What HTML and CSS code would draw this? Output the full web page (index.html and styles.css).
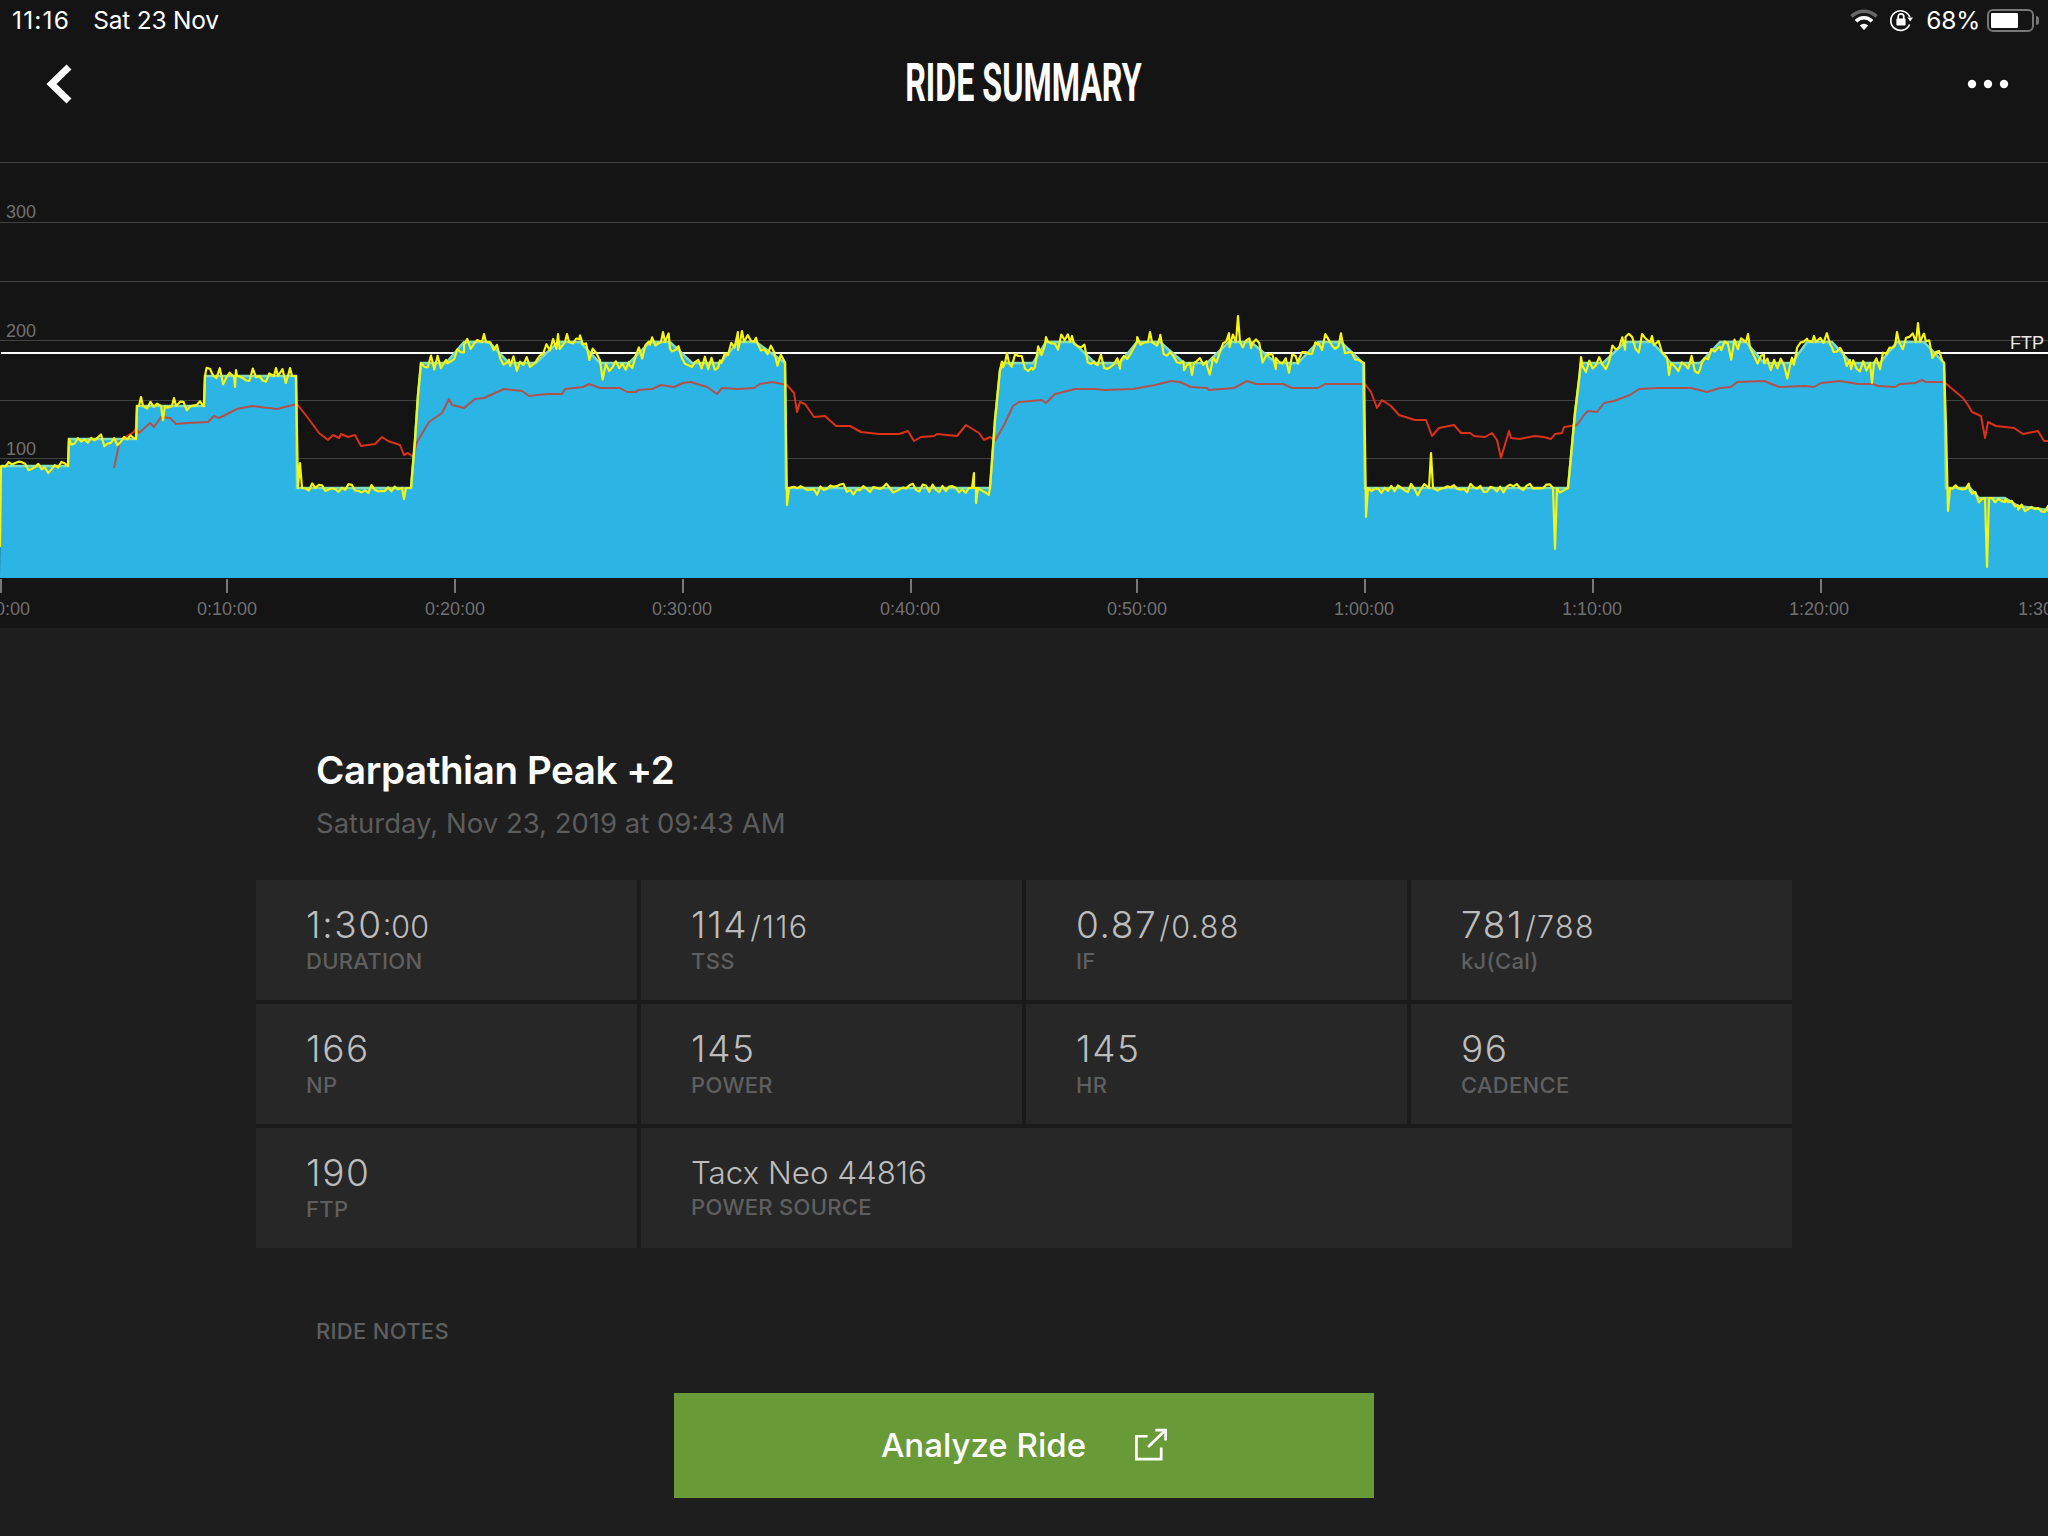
FILE: index.html
```html
<!DOCTYPE html>
<html lang="en">
<head>
<meta charset="utf-8">
<title>Ride Summary</title>
<link rel="stylesheet" href="styles.css">
</head>
<body>
<div class="page">
  <section class="top">
    <div class="status">
      <div class="status-left"><span class="clock">11:16</span><span>Sat 23 Nov</span></div>
      <div class="status-right">
        <svg class="ic-wifi" viewBox="0 0 30 22" aria-hidden="true">
          <path class="wifi-dim" d="M2.5 7.5A17.5 17.5 0 0 1 27.5 7.5"/>
          <path class="wifi-on" d="M7 12.2A11 11 0 0 1 23 12.2"/>
          <path class="wifi-dot" d="M10.8 16.4Q15 13.2 19.2 16.4L15 21Z"/>
        </svg>
        <svg class="ic-lock" viewBox="0 0 24 24" aria-hidden="true">
          <path class="lock-ring" d="M20.8 9.2A9.8 9.8 0 1 0 20.6 16.5"/>
          <path class="lock-fill" d="M18.4 9.6H24L21.2 13.4Z"/>
          <path class="lock-shackle" d="M9.2 11V8.6A2.8 2.8 0 0 1 14.8 8.6V11"/>
          <rect class="lock-fill" x="7.4" y="10.6" width="9.2" height="7" rx="1"/>
        </svg>
        <span class="batt-pct">68%</span>
        <div class="battery"><div class="battery-level"></div></div>
        <div class="battery-cap"></div>
      </div>
    </div>
    <header class="nav">
      <svg class="ic-back" viewBox="0 0 30 44" aria-hidden="true"><path d="M25 5 7.5 22 25 39"/></svg>
      <h1 class="nav-title">RIDE SUMMARY</h1>
      <svg class="ic-more" viewBox="0 0 42 10" aria-hidden="true">
        <circle cx="5" cy="5" r="4.2"/><circle cx="21" cy="5" r="4.2"/><circle cx="37" cy="5" r="4.2"/>
      </svg>
    </header>
    <svg class="chart" viewBox="0 128 2048 500" aria-label="Power chart">
      <g class="grid-lines">
        <line x1="0" x2="2048" y1="162.5" y2="162.5"/>
        <line x1="0" x2="2048" y1="222.5" y2="222.5"/>
        <line x1="0" x2="2048" y1="281.5" y2="281.5"/>
        <line x1="0" x2="2048" y1="340.5" y2="340.5"/>
        <line x1="0" x2="2048" y1="400.5" y2="400.5"/>
        <line x1="0" x2="2048" y1="458.5" y2="458.5"/>
      </g>
      <g class="axis-y">
        <text x="6" y="218">300</text>
        <text x="6" y="337">200</text>
        <text x="6" y="455">100</text>
      </g>
      <rect class="ftp-line" x="1" y="352" width="2047" height="2"/>
      <text class="ftp-label" x="2010" y="349">FTP</text>
      <path id="area" class="area"/>
      <path id="hr" class="hr"/>
      <path id="area-veil" class="area-veil"/>
      <path id="target" class="target"/>
      <path id="power" class="power"/>
      <g class="ticks">
        <line x1="1" x2="1" y1="579" y2="593"/>
        <line x1="227" x2="227" y1="579" y2="593"/>
        <line x1="455" x2="455" y1="579" y2="593"/>
        <line x1="683" x2="683" y1="579" y2="593"/>
        <line x1="911" x2="911" y1="579" y2="593"/>
        <line x1="1137" x2="1137" y1="579" y2="593"/>
        <line x1="1365" x2="1365" y1="579" y2="593"/>
        <line x1="1593" x2="1593" y1="579" y2="593"/>
        <line x1="1821" x2="1821" y1="579" y2="593"/>
      </g>
      <g class="axis-x">
        <text x="0" y="615">0:00:00</text>
        <text x="227" y="615">0:10:00</text>
        <text x="455" y="615">0:20:00</text>
        <text x="682" y="615">0:30:00</text>
        <text x="910" y="615">0:40:00</text>
        <text x="1137" y="615">0:50:00</text>
        <text x="1364" y="615">1:00:00</text>
        <text x="1592" y="615">1:10:00</text>
        <text x="1819" y="615">1:20:00</text>
        <text x="2048" y="615">1:30:00</text>
      </g>
    </svg>
  </section>
  <main class="content">
    <h2 class="ride-name">Carpathian Peak +2</h2>
    <p class="ride-date">Saturday, Nov 23, 2019 at 09:43 AM</p>
    <div class="stats">
      <div class="stat"><div class="val">1:30<small class="small-tight">:00</small></div><div class="lab">DURATION</div></div>
      <div class="stat"><div class="val">114<small>/116</small></div><div class="lab">TSS</div></div>
      <div class="stat"><div class="val">0.87<small>/0.88</small></div><div class="lab">IF</div></div>
      <div class="stat"><div class="val">781<small>/788</small></div><div class="lab">kJ(Cal)</div></div>
      <div class="stat"><div class="val">166</div><div class="lab">NP</div></div>
      <div class="stat"><div class="val">145</div><div class="lab">POWER</div></div>
      <div class="stat"><div class="val">145</div><div class="lab">HR</div></div>
      <div class="stat"><div class="val">96</div><div class="lab">CADENCE</div></div>
      <div class="stat"><div class="val">190</div><div class="lab">FTP</div></div>
      <div class="stat stat-wide"><div class="val val-text">Tacx Neo 44816</div><div class="lab lab-tight">POWER SOURCE</div></div>
    </div>
    <div class="notes">RIDE NOTES</div>
    <button class="analyze" type="button">
      <span>Analyze Ride</span>
      <svg class="ic-ext" viewBox="0 0 34 34" aria-hidden="true">
        <path d="M14 8.5H2.5V32H28V20"/><path d="M14.5 19.5 32 2.5"/><path d="M22 2.2H32.6V13"/>
      </svg>
    </button>
  </main>
</div>
<script src="chart.js"></script>
</body>
</html>
```

FILE: styles.css
```css
* { box-sizing: border-box; }
html, body { margin: 0; padding: 0; background: #1e1e1e; }
.page {
  width: 2048px;
  height: 1536px;
  overflow: hidden;
  display: flex;
  flex-direction: column;
  font-family: Inter, "Liberation Sans", sans-serif;
  color: #fff;
}
.top { background: #141414; height: 628px; flex: none; }
.status {
  height: 40px;
  display: flex;
  justify-content: space-between;
  align-items: center;
  padding: 0 9px 0 12px;
  font-size: 24.5px;
  letter-spacing: -0.2px;
}
.status-left { display: flex; gap: 23px; }
.clock { letter-spacing: 1.2px; }
.status-right { display: flex; align-items: center; }
.ic-wifi { width: 30px; height: 22px; margin-right: 10px; }
.wifi-dim, .wifi-on { fill: none; stroke-width: 3.6; }
.wifi-dim { stroke: #666; }
.wifi-on { stroke: #fff; }
.wifi-dot { fill: #fff; }
.ic-lock { width: 24px; height: 24px; margin-right: 13px; }
.lock-ring, .lock-shackle { fill: none; stroke: #fff; stroke-width: 1.7; }
.lock-fill { fill: #fff; }
.batt-pct { margin-right: 7px; }
.battery {
  width: 47px;
  height: 23px;
  border: 2px solid #777;
  border-radius: 6px;
  padding: 2px;
}
.battery-level { width: 68%; height: 100%; background: #fff; border-radius: 1px; }
.battery-cap {
  width: 3px;
  height: 9px;
  margin-left: 2px;
  background: #777;
  border-radius: 0 3px 3px 0;
}
.nav {
  height: 88px;
  display: grid;
  grid-template-columns: 1fr auto 1fr;
  align-items: center;
  padding: 0 39px 0 44px;
}
.ic-back { width: 30px; height: 44px; }
.ic-back path { fill: none; stroke: #fff; stroke-width: 7; }
.nav-title {
  margin: 0 6px 2px 0;
  font-family: Roboto, "Liberation Sans", sans-serif;
  font-size: 53px;
  line-height: 60px;
  font-weight: 700;
  transform: scaleX(0.608);
  white-space: nowrap;
}
.ic-more { width: 42px; height: 10px; justify-self: end; fill: #fff; }
.chart { display: block; width: 2048px; height: 500px; }
.grid-lines line { stroke: #424242; stroke-width: 1; }
.axis-y text, .axis-x text {
  font-family: "Liberation Sans", sans-serif;
  font-size: 18px;
  fill: #707070;
}
.axis-x text { text-anchor: middle; }
.ftp-line { fill: #fff; }
.ftp-label { font-family: "Liberation Sans", sans-serif; font-size: 18px; fill: #e8e8e8; }
.area { fill: #2bb5e5; }
.area-veil { fill: #2bb5e5; opacity: 0.25; }
.hr { fill: none; stroke: #dc3118; stroke-width: 2; stroke-linejoin: round; }
.target { fill: none; stroke: #80dcc0; stroke-width: 2.5; }
.power { fill: none; stroke: #f4f415; stroke-width: 2.2; stroke-linejoin: round; }
.ticks line { stroke: #777; stroke-width: 2; }

.content { flex: 1; width: 1536px; margin: 0 auto; }
.ride-name {
  margin: 120px 0 0 60px;
  font-size: 38.5px;
  line-height: 44px;
  font-weight: 600;
  letter-spacing: -0.4px;
}
.ride-date {
  margin: 13px 0 0 60px;
  font-size: 27.5px;
  line-height: 36px;
  color: #5c5c5c;
}
.stats {
  margin-top: 39px;
  display: grid;
  grid-template-columns: repeat(4, 381px);
  grid-auto-rows: 120px;
  gap: 4px;
  background: #1b1b1b;
}
.stat { background: #272727; padding: 23px 0 0 50px; }
.stat-wide { grid-column: span 3; }
.val {
  height: 44px;
  font-size: 37px;
  line-height: 44px;
  font-weight: 300;
  color: #bcbcbc;
  white-space: pre;
  letter-spacing: 1.6px;
}
.val small { font-size: 30.5px; margin-left: 2px; letter-spacing: 1.3px; }
.val .small-tight { margin-left: 0; letter-spacing: 0; }
.val-text { font-size: 31.3px; letter-spacing: 0; }
.lab {
  margin-top: 1px;
  font-size: 22px;
  line-height: 26px;
  font-weight: 500;
  color: #5f5f5f;
  letter-spacing: 0.3px;
}
.lab-tight { margin-top: -1px; }
.notes {
  margin: 68px 0 0 60px;
  font-size: 22px;
  line-height: 30px;
  font-weight: 500;
  color: #5f5f5f;
  letter-spacing: 0.3px;
}
.analyze {
  display: flex;
  align-items: center;
  justify-content: center;
  gap: 48px;
  width: 700px;
  height: 105px;
  margin: 47px auto 0;
  padding: 0 0 2px;
  border: 0;
  background: #689a37;
  color: #fff;
  font-family: Inter, "Liberation Sans", sans-serif;
  font-size: 33px;
  font-weight: 500;
}
.ic-ext { width: 33px; height: 33px; }
.ic-ext path { fill: none; stroke: #fff; stroke-width: 2.8; }
```

FILE: chart.js
```js
// Workout profile, heart rate and power traces, in chart coordinates.
var B = 578, H = 342, M = 363, L = 488;
var profile = [
  [0,578],[1,466],[68,466],[69,439],[136,439],[137,406],[204,406],[205,376],[296,376],[297,488],
  [411,488],[415,440],[418,395],[421,363],[446,363],[464,H],[489,H],[509,M],[536,M],[558,H],[580,H],[600,M],
  [629,M],[650,H],[670,H],[692,M],[720,M],[738,H],[756,H],[785,M],[786,L],
  [990,L],[995,420],[1000,370],[1003,M],[1033,M],[1046,H],[1073,H],[1095,M],[1120,M],[1137,H],[1160,H],[1184,M],
  [1207,M],[1229,H],[1251,H],[1276,M],[1298,M],[1318,H],[1341,H],[1363,M],[1365,L],
  [1568,L],[1575,413],[1581,M],[1603,M],[1625,H],[1652,H],[1671,M],[1700,M],[1720,H],[1746,H],[1764,M],
  [1792,M],[1807,H],[1832,H],[1851,M],[1880,M],[1897,H],[1924,H],[1944,M],[1946,L],
  [1970,L],[1979,498],[2005,498],[2018,506],[2048,510]
];
var hr = [
  [114,468],[120,440],[134,432],[136,428],[139,433],[150,423],[154,427],[161,417],[170,418],[176,424],[187,423],[208,422],
  [214,416],[219,418],[237,409],[252,406],[277,409],[297,404],[308,418],[319,433],[328,440],[333,435],[339,438],[341,434],
  [348,437],[355,435],[361,446],[375,444],[382,437],[388,441],[400,445],[404,455],[408,453],[413,457],[417,442],[429,422],
  [442,413],[449,399],[452,405],[464,408],[475,399],[484,398],[504,389],[522,391],[529,396],[547,394],[562,394],[565,389],
  [583,387],[589,384],[600,388],[620,388],[627,392],[636,392],[638,390],[652,389],[661,385],[674,387],[683,383],[691,382],
  [707,387],[717,394],[722,388],[738,389],[754,388],[760,384],[772,382],[787,385],[794,393],[797,412],[800,402],[805,404],
  [814,417],[825,416],[836,426],[850,426],[861,432],[879,434],[899,434],[908,431],[914,441],[921,437],[934,436],[937,434],
  [957,436],[966,425],[979,433],[984,440],[990,437],[995,441],[1004,425],[1013,406],[1019,402],[1042,400],[1046,403],
  [1055,394],[1075,389],[1095,389],[1104,390],[1133,389],[1155,385],[1171,381],[1180,382],[1191,387],[1207,388],[1209,390],
  [1234,388],[1247,381],[1256,384],[1283,384],[1292,388],[1318,388],[1325,384],[1365,384],[1371,392],[1377,408],[1382,400],
  [1391,406],[1399,415],[1415,420],[1426,420],[1432,436],[1439,428],[1454,425],[1461,433],[1470,433],[1474,436],[1485,437],
  [1492,433],[1497,440],[1501,458],[1509,431],[1511,438],[1519,439],[1535,436],[1544,437],[1551,439],[1555,434],[1562,433],
  [1564,427],[1577,425],[1584,415],[1588,411],[1597,412],[1604,403],[1614,401],[1630,395],[1639,389],[1658,388],[1691,388],
  [1707,392],[1720,388],[1731,387],[1737,382],[1764,381],[1779,387],[1805,386],[1814,387],[1821,383],[1840,381],[1858,384],
  [1873,384],[1878,386],[1895,387],[1900,384],[1915,383],[1922,380],[1926,382],[1944,382],[1963,398],[1968,405],[1972,412],
  [1981,416],[1985,438],[1988,422],[1996,426],[2014,428],[2023,434],[2038,431],[2044,441],[2048,441]
];
var spikes = [
  [141,397],[163,420],[174,398],[235,387],[236,370],[276,368],[290,368],[300,463],[404,499],[484,334],[567,334],[663,332],
  [742,331],[787,505],[974,473],[976,503],[1007,353],[1072,336],[1150,332],[1192,375],[1238,316],[1366,517],[1431,453],
  [1555,549],[1652,336],[1669,375],[1748,334],[1814,336],[1872,383],[1897,332],[1918,323],[1948,511],[1987,567]
];

function toPath(pts) {
  return pts.map(function (p, i) {
    return (i ? "L" : "M") + p[0].toFixed(1) + " " + p[1].toFixed(1);
  }).join("");
}
function profileAt(x) {
  for (var i = 1; i < profile.length; i++) {
    if (x <= profile[i][0]) {
      var a = profile[i - 1], b = profile[i];
      return a[1] + (b[1] - a[1]) * (x - a[0]) / Math.max(b[0] - a[0], 1);
    }
  }
  return profile[profile.length - 1][1];
}
var seed = 20191123;
function rnd() {
  seed = (seed * 1664525 + 1013904223) >>> 0;
  return seed / 4294967296;
}
function buildPower() {
  var pts = [[0, 547]];
  var xs = [];
  for (var x = 2; x < 2048; x += 3.3) { xs.push(x); }
  profile.forEach(function (p) { xs.push(p[0]); });
  xs.sort(function (a, b) { return a - b; });
  xs.forEach(function (x) {
    if (x < 1) return;
    var base = profileAt(x);
    var steep = Math.abs(profileAt(x + 2) - profileAt(x - 2)) > 20;
    var amp = steep ? 0 : (base < 400 ? 18 : 9);
    var r = rnd() - 0.5;
    var y = base + r * amp + (rnd() > 0.85 ? (rnd() - 0.3) * amp * 0.9 : 0);
    var near = spikes.some(function (s) { return Math.abs(s[0] - x) < 4; });
    if (!near) pts.push([x, y]);
  });
  spikes.forEach(function (s) {
    pts.push([s[0] - 2, profileAt(s[0] - 3)]);
    pts.push([s[0], s[1]]);
    pts.push([s[0] + 2, profileAt(s[0] + 3)]);
  });
  pts.sort(function (a, b) { return a[0] - b[0]; });
  return pts;
}
var areaD = toPath(profile) + "L2048 " + B + "L0 " + B + "Z";
document.getElementById("area").setAttribute("d", areaD);
document.getElementById("area-veil").setAttribute("d", areaD);
document.getElementById("target").setAttribute("d", toPath(profile.slice(1)));
document.getElementById("hr").setAttribute("d", toPath(hr));
document.getElementById("power").setAttribute("d", toPath(buildPower()));
```
